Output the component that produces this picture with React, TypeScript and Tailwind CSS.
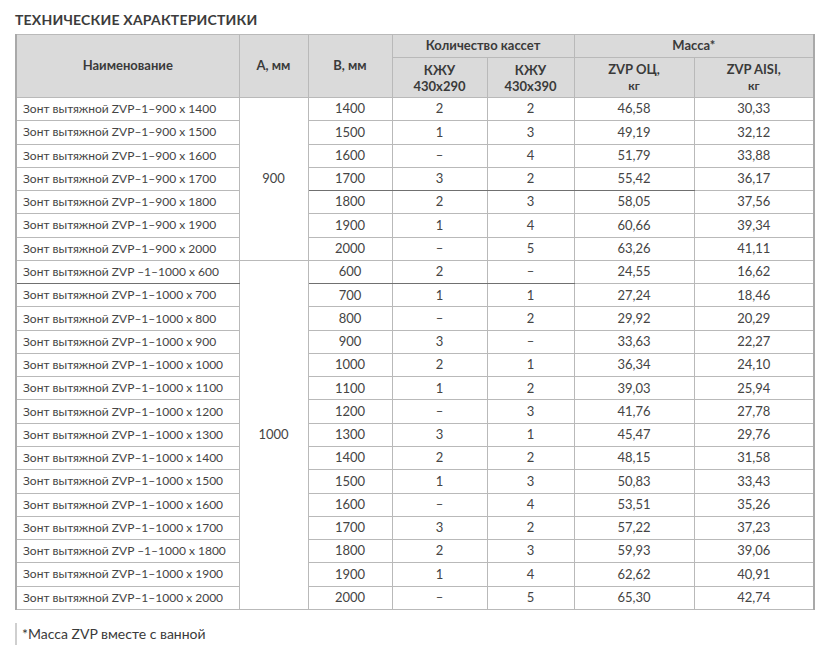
import React from "react";

type Row = { b: string; k1: string; k2: string; m1: string; m2: string; name: string };

const g900: Row[] = [
  ["1400", "2", "2", "46,58", "30,33"],
  ["1500", "1", "3", "49,19", "32,12"],
  ["1600", "–", "4", "51,79", "33,88"],
  ["1700", "3", "2", "55,42", "36,17"],
  ["1800", "2", "3", "58,05", "37,56"],
  ["1900", "1", "4", "60,66", "39,34"],
  ["2000", "–", "5", "63,26", "41,11"],
].map(([b, k1, k2, m1, m2]) => ({ b, k1, k2, m1, m2, name: `Зонт вытяжной ZVP–1–900 x ${b}` }));

const g1000: Row[] = [
  ["600", "2", "–", "24,55", "16,62"],
  ["700", "1", "1", "27,24", "18,46"],
  ["800", "–", "2", "29,92", "20,29"],
  ["900", "3", "–", "33,63", "22,27"],
  ["1000", "2", "1", "36,34", "24,10"],
  ["1100", "1", "2", "39,03", "25,94"],
  ["1200", "–", "3", "41,76", "27,78"],
  ["1300", "3", "1", "45,47", "29,76"],
  ["1400", "2", "2", "48,15", "31,58"],
  ["1500", "1", "3", "50,83", "33,43"],
  ["1600", "–", "4", "53,51", "35,26"],
  ["1700", "3", "2", "57,22", "37,23"],
  ["1800", "2", "3", "59,93", "39,06"],
  ["1900", "1", "4", "62,62", "40,91"],
  ["2000", "–", "5", "65,30", "42,74"],
].map(([b, k1, k2, m1, m2]) => ({
  b,
  k1,
  k2,
  m1,
  m2,
  name: b === "600" || b === "1800" ? `Зонт вытяжной ZVP –1–1000 x ${b}` : `Зонт вытяжной ZVP–1–1000 x ${b}`,
}));

const td = "border border-[#b9b9b9] text-center";
const tdDark = "border border-[#b9b9b9] border-b-[#707070] text-center";
const th = "border border-[#b9b9b9] bg-[#dadada] text-center font-bold text-[#3a3a3a]";

export default function App() {
  return (
    <div className="w-[826px] h-[647px] bg-white pl-[15px] pt-[9px] text-[#3a3a3a]" style={{ fontFamily: "Lato, 'Noto Sans', sans-serif" }}>
      <h1 className="text-[14px] font-bold leading-[22px] tracking-[0.2px] text-[#3c3c3c]">ТЕХНИЧЕСКИЕ ХАРАКТЕРИСТИКИ</h1>
      <table className="mt-[3px] w-[798px] table-fixed border-collapse border-l-2 border-r-2 border-l-[#a9a9a9] border-r-[#a9a9a9] text-[13px]">
        <colgroup>
          <col className="w-[223px]" />
          <col className="w-[69px]" />
          <col className="w-[84px]" />
          <col className="w-[95px]" />
          <col className="w-[87px]" />
          <col className="w-[120px]" />
          <col className="w-[120px]" />
        </colgroup>
        <thead>
          <tr className="h-[23px] text-[13px]">
            <th rowSpan={2} className={th}>Наименование</th>
            <th rowSpan={2} className={th}>A, мм</th>
            <th rowSpan={2} className={th}>B, мм</th>
            <th colSpan={2} className={th}>Количество кассет</th>
            <th colSpan={2} className={th}>Масса*</th>
          </tr>
          <tr className="h-[40px] text-[13px] leading-[16px]">
            <th className={th}>КЖУ<br />430x290</th>
            <th className={th}>КЖУ<br />430x390</th>
            <th className={th}>ZVP ОЦ,<br /><span className="text-[12px]">кг</span></th>
            <th className={th}>ZVP AISI,<br /><span className="text-[12px]">кг</span></th>
          </tr>
        </thead>
        <tbody>
          {[g900, g1000].map((g, gi) =>
            g.map((r, i) => {
              const darkB = gi === 0 && r.b === "1700";
              const darkA = gi === 1 && r.b === "600";
              return (
                <tr key={`${gi}-${i}`} className="h-[23.27px] text-[#444]">
                  <td className={`${darkA ? "border-b-[#707070]" : ""} border border-[#b9b9b9] pl-[6px] text-left text-[12px] whitespace-nowrap`}>{r.name}</td>
                  {i === 0 && (
                    <td rowSpan={g.length} className={`${td} align-middle`}>{gi === 0 ? "900" : "1000"}</td>
                  )}
                  <td className={darkA || darkB ? tdDark : td}>{r.b}</td>
                  <td className={darkA || darkB ? tdDark : td}>{r.k1}</td>
                  <td className={darkA || darkB ? tdDark : td}>{r.k2}</td>
                  <td className={darkB ? tdDark : td}>{r.m1}</td>
                  <td className={td}>{r.m2}</td>
                </tr>
              );
            })
          )}
        </tbody>
      </table>
      <div className="mt-[13px] flex h-[22px] items-center border-l-2 border-[#cfcfcf] pl-[5px] text-[14px] text-[#3a3a3a]">
        *Масса ZVP вместе с ванной
      </div>
    </div>
  );
}
